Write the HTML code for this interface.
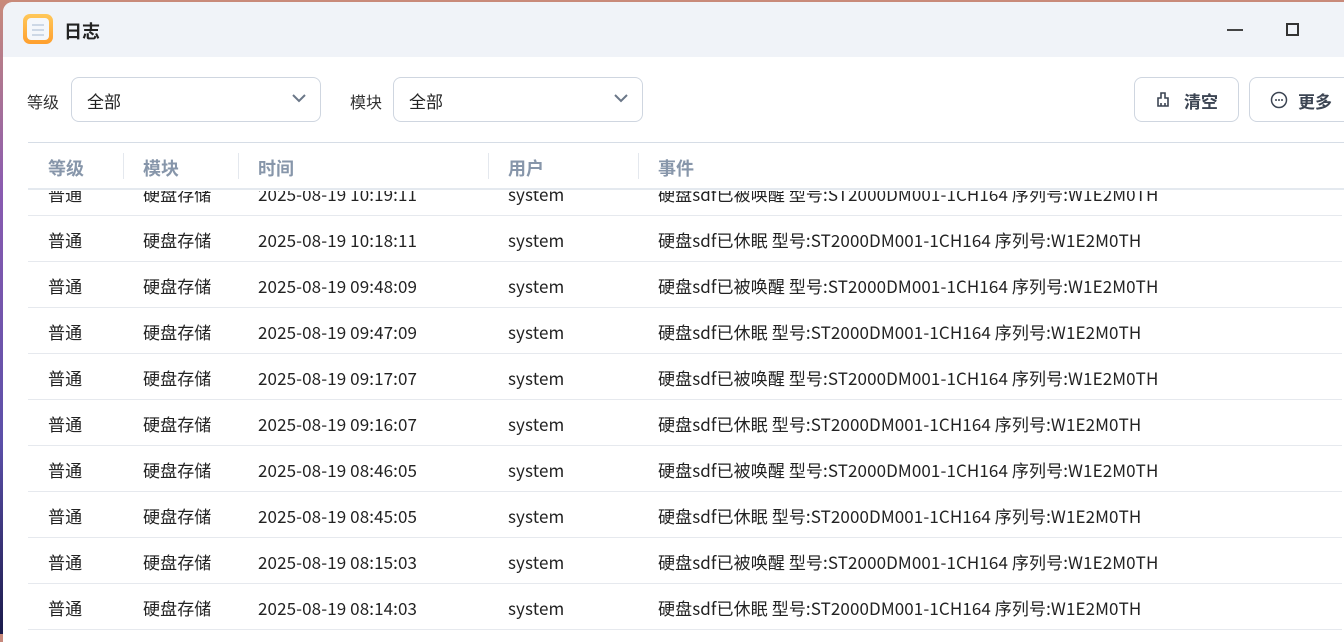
<!DOCTYPE html>
<html><head><meta charset="utf-8"><style>
*{box-sizing:border-box;margin:0;padding:0}
body{width:1344px;height:634px;overflow:hidden;background:linear-gradient(180deg,#c98a7a 0,#8a5bb0 30%,#5b4fa8 70%,#1a1a4a 100%);font-family:"Noto Sans CJK SC","Liberation Sans",sans-serif;position:relative}
.win{position:absolute;left:3px;top:2px;width:1360px;height:640px;background:#fff;border-radius:10px 0 0 0;overflow:hidden}
.title{height:55px;background:#f0f3f8;position:relative}
.title .ic{position:absolute;left:20px;top:12px;width:30px;height:30px;border-radius:7px;background:linear-gradient(#ffc85a,#ff9f2e)}
.title .ic i{position:absolute;left:4px;top:4px;width:22px;height:22px;background:#f4f7fb;border-radius:4px}
.title .ic em{position:absolute;left:9px;width:12px;height:2px;background:#cdd8e6}
.title .t{position:absolute;left:61px;top:16px;font-size:18px;line-height:26px;font-weight:bold;color:#222}
.min{position:absolute;left:1224px;top:27px;width:16px;height:2px;background:#444}
.max{position:absolute;left:1283px;top:21px;width:13px;height:13px;border:2px solid #333}
.lab{position:absolute;font-size:16px;line-height:22px;color:#333;top:88px}
.sel{position:absolute;top:75px;height:45px;border:1px solid #cfd6e0;border-radius:8px;font-size:17px;line-height:24px;color:#222;padding:11px 0 0 15px}
.sel svg{position:absolute;right:13px;top:15px}
.btn{position:absolute;top:75px;height:45px;border:1px solid #cfd6e0;border-radius:8px;font-size:17px;line-height:24px;font-weight:bold;color:#3c4553}
.thead{position:absolute;left:25px;top:140px;width:1330px;height:48px;border-top:1px solid #d6dde6;border-bottom:2px solid #e4e9ef;background:#fff;z-index:2}
.thead span{position:absolute;top:12px;font-size:18px;line-height:26px;font-weight:bold;color:#8796aa}
.thead b{position:absolute;top:10px;width:1px;height:26px;background:#e4e8ee}
.body{position:absolute;left:25px;top:189px;width:1330px;height:450px;overflow:hidden}
.row{position:absolute;left:0;width:1314px;height:46px;border-bottom:1px solid #e6e9ee;font-size:17px;color:#222;letter-spacing:0.1px}
.row span{position:absolute;top:12px;line-height:24px;white-space:nowrap}
</style></head><body>
<div class="win">
<div class="title"><div class="ic"><i></i><em style="top:10px"></em><em style="top:15px"></em><em style="top:20px"></em></div><div class="t">日志</div><div class="min"></div><div class="max"></div></div>
<div class="lab" style="left:24px">等级</div>
<div class="sel" style="left:68px;width:250px">全部<svg width="16" height="10"><path d="M2 2l6 6 6-6" fill="none" stroke="#6b7788" stroke-width="2"/></svg></div>
<div class="lab" style="left:347px">模块</div>
<div class="sel" style="left:390px;width:250px">全部<svg width="16" height="10"><path d="M2 2l6 6 6-6" fill="none" stroke="#6b7788" stroke-width="2"/></svg></div>
<div class="btn" style="left:1131px;width:105px"><svg style="position:absolute;left:21px;top:14px" width="14" height="16"><path d="M5 1h4v5h3v8H2V6h3z M5 14v-3 M9 14v-3" fill="none" stroke="#3c4553" stroke-width="1.6"/></svg><span style="position:absolute;left:49px;top:11px">清空</span></div>
<div class="btn" style="left:1246px;width:120px"><svg style="position:absolute;left:20px;top:13px" width="18" height="18"><circle cx="9" cy="9" r="7.5" fill="none" stroke="#3c4553" stroke-width="1.5"/><circle cx="6" cy="9" r="1" fill="#3c4553"/><circle cx="9" cy="9" r="1" fill="#3c4553"/><circle cx="12" cy="9" r="1" fill="#3c4553"/></svg><span style="position:absolute;left:48px;top:11px">更多</span></div>
<div class="thead"><span style="left:20px">等级</span><b style="left:95px"></b><span style="left:115px">模块</span><b style="left:210px"></b><span style="left:230px">时间</span><b style="left:460px"></b><span style="left:480px">用户</span><b style="left:610px"></b><span style="left:630px">事件</span></div>
<div class="body">
<div class="row" style="top:-21px"><span style="left:20px">普通</span><span style="left:115px">硬盘存储</span><span style="left:230px">2025-08-19 10:19:11</span><span style="left:480px">system</span><span style="left:630px">硬盘sdf已被唤醒 型号:ST2000DM001-1CH164 序列号:W1E2M0TH</span></div>
<div class="row" style="top:25px"><span style="left:20px">普通</span><span style="left:115px">硬盘存储</span><span style="left:230px">2025-08-19 10:18:11</span><span style="left:480px">system</span><span style="left:630px">硬盘sdf已休眠 型号:ST2000DM001-1CH164 序列号:W1E2M0TH</span></div>
<div class="row" style="top:71px"><span style="left:20px">普通</span><span style="left:115px">硬盘存储</span><span style="left:230px">2025-08-19 09:48:09</span><span style="left:480px">system</span><span style="left:630px">硬盘sdf已被唤醒 型号:ST2000DM001-1CH164 序列号:W1E2M0TH</span></div>
<div class="row" style="top:117px"><span style="left:20px">普通</span><span style="left:115px">硬盘存储</span><span style="left:230px">2025-08-19 09:47:09</span><span style="left:480px">system</span><span style="left:630px">硬盘sdf已休眠 型号:ST2000DM001-1CH164 序列号:W1E2M0TH</span></div>
<div class="row" style="top:163px"><span style="left:20px">普通</span><span style="left:115px">硬盘存储</span><span style="left:230px">2025-08-19 09:17:07</span><span style="left:480px">system</span><span style="left:630px">硬盘sdf已被唤醒 型号:ST2000DM001-1CH164 序列号:W1E2M0TH</span></div>
<div class="row" style="top:209px"><span style="left:20px">普通</span><span style="left:115px">硬盘存储</span><span style="left:230px">2025-08-19 09:16:07</span><span style="left:480px">system</span><span style="left:630px">硬盘sdf已休眠 型号:ST2000DM001-1CH164 序列号:W1E2M0TH</span></div>
<div class="row" style="top:255px"><span style="left:20px">普通</span><span style="left:115px">硬盘存储</span><span style="left:230px">2025-08-19 08:46:05</span><span style="left:480px">system</span><span style="left:630px">硬盘sdf已被唤醒 型号:ST2000DM001-1CH164 序列号:W1E2M0TH</span></div>
<div class="row" style="top:301px"><span style="left:20px">普通</span><span style="left:115px">硬盘存储</span><span style="left:230px">2025-08-19 08:45:05</span><span style="left:480px">system</span><span style="left:630px">硬盘sdf已休眠 型号:ST2000DM001-1CH164 序列号:W1E2M0TH</span></div>
<div class="row" style="top:347px"><span style="left:20px">普通</span><span style="left:115px">硬盘存储</span><span style="left:230px">2025-08-19 08:15:03</span><span style="left:480px">system</span><span style="left:630px">硬盘sdf已被唤醒 型号:ST2000DM001-1CH164 序列号:W1E2M0TH</span></div>
<div class="row" style="top:393px"><span style="left:20px">普通</span><span style="left:115px">硬盘存储</span><span style="left:230px">2025-08-19 08:14:03</span><span style="left:480px">system</span><span style="left:630px">硬盘sdf已休眠 型号:ST2000DM001-1CH164 序列号:W1E2M0TH</span></div>
</div>
</div>
</body></html>
